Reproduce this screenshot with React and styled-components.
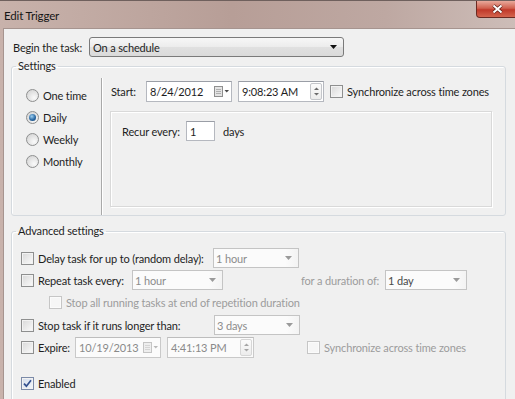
import React from "react";
import styled, { createGlobalStyle } from "styled-components";

const GlobalStyle = createGlobalStyle`
  html, body {
    margin: 0;
    padding: 0;
    background: #f0f0f0;
  }
  body {
    font-family: Lato, "Liberation Sans", sans-serif;
    font-size: 11px;
    letter-spacing: -0.15px;
    color: #1e1e1e;
  }
`;

const Window = styled.div`
  width: 515px;
  height: 399px;
  overflow: hidden;
  display: flex;
  flex-direction: column;
  background: linear-gradient(to right, #c8b2ab, #b79e97 45%, #bea8a2 75%, #cdbdb8);
`;

const TitleBar = styled.div`
  height: 28px;
  box-sizing: border-box;
  border-top: 1px solid #6f605d;
  display: flex;
  justify-content: space-between;
  align-items: flex-start;
  flex-shrink: 0;
`;

const Title = styled.span`
  padding: 7px 0 0 4px;
  line-height: 16px;
  font-size: 11.5px;
  color: #161616;
`;

const CloseButton = styled.div`
  width: 43px;
  height: 17px;
  margin-right: -4px;
  box-sizing: border-box;
  border: 1px solid #6b2a22;
  border-top: none;
  border-radius: 0 0 0 4px;
  background: linear-gradient(#e9a99b, #d0614f 45%, #c0392a 55%, #d4644e);
  display: flex;
  align-items: center;
  justify-content: center;
`;

const Frame = styled.div`
  flex: 1;
  display: flex;
  padding-left: 3px;
`;

const Client = styled.div`
  flex: 1;
  background: #f0f0f0;
  border-top: 1px solid #a6948f;
  border-left: 1px solid #a6948f;
  padding: 8px 0 0 7px;
`;

const BeginRow = styled.div`
  display: flex;
  align-items: center;
  height: 20px;
  padding-left: 2px;
`;

const Label = styled.span`
  width: ${(p) => (p.$w ? `${p.$w}px` : "auto")};
  margin-left: ${(p) => p.$ml || 0}px;
  flex-shrink: 0;
  white-space: nowrap;
  color: ${(p) => (p.$dim ? "#9c9c9c" : "#1e1e1e")};
`;

const Select = styled.div`
  width: 255px;
  height: 20px;
  box-sizing: border-box;
  border: 1px solid #7a7a7a;
  border-radius: 3px;
  background: linear-gradient(#f7f7f7, #ececec 50%, #e0e0e0 51%, #dadada);
  display: flex;
  align-items: center;
  justify-content: space-between;
  padding: 0 6px 0 3px;
`;

const Group = styled.fieldset`
  width: 495px;
  box-sizing: border-box;
  margin: ${(p) => p.$mt}px 0 0 0;
  padding: 0;
  border: 1px solid #d5dadf;
  border-radius: 3px;
  box-shadow: inset 1px 1px 0 #fff;
  min-width: 0;
`;

const Legend = styled.legend`
  margin-left: 4px;
  padding: 0 2px;
  line-height: 16px;
  color: #1e1e1e;
`;

const SettingsBody = styled.div`
  display: flex;
  height: 141px;
`;

const RadioColumn = styled.div`
  width: 89px;
  box-sizing: border-box;
  padding: 10px 0 0 14px;
  display: flex;
  flex-direction: column;
`;

const RadioRow = styled.div`
  height: 22px;
  display: flex;
  align-items: center;
  gap: 4px;
`;

const RadioCircle = styled.span`
  width: 13px;
  height: 13px;
  box-sizing: border-box;
  border-radius: 50%;
  border: 1px solid #8e8f8f;
  background: radial-gradient(circle at 65% 70%, #fafafa, #e2e2e2 55%, #cfcfcf);
  display: flex;
  align-items: center;
  justify-content: center;
  flex-shrink: 0;
`;

const RadioDot = styled.span`
  width: 7px;
  height: 7px;
  border-radius: 50%;
  background: radial-gradient(circle at 40% 35%, #9fd0f0, #2c6aa4 55%, #0f3a6b);
`;

const Separator = styled.div`
  width: 0;
  margin-top: 4px;
  border-left: 1px solid #a9a9a9;
  border-right: 1px solid #ffffff;
`;

const SchedulePanel = styled.div`
  flex: 1;
  padding: 7px 0 0 7px;
  display: flex;
  flex-direction: column;
`;

const StartRow = styled.div`
  display: flex;
  align-items: center;
  height: 21px;
`;

const Field = styled.div`
  width: ${(p) => p.$w}px;
  height: ${(p) => p.$h || 21}px;
  margin-left: ${(p) => p.$ml || 0}px;
  box-sizing: border-box;
  border: 1px solid ${(p) => (p.$disabled ? "#c9c9c9" : "#b5b8bf")};
  border-top-color: ${(p) => (p.$disabled ? "#bdbdbd" : "#9a9ea6")};
  background: ${(p) => (p.$disabled ? "#fbfbfb" : "#ffffff")};
  color: ${(p) => (p.$disabled ? "#8a8a8a" : "#1e1e1e")};
  display: flex;
  align-items: center;
  justify-content: space-between;
  padding: 0 1px 0 3px;
  flex-shrink: 0;
`;

const Spinner = styled.div`
  width: 12px;
  height: 17px;
  box-sizing: border-box;
  border: 1px solid ${(p) => (p.$disabled ? "#d6d6d6" : "#c4c6ca")};
  border-radius: 2px;
  background: linear-gradient(#fbfbfb, #ececec);
  display: flex;
  align-items: center;
  justify-content: center;
`;

const RecurBox = styled.div`
  width: 382px;
  height: 96px;
  box-sizing: border-box;
  margin-top: 9px;
  border: 1px solid #d9d9d9;
  box-shadow: 1px 1px 0 #ffffff, inset 1px 1px 0 #ffffff;
  padding: 9px 0 0 11px;
`;

const RecurRow = styled.div`
  display: flex;
  align-items: center;
  height: 20px;
`;

const AdvancedBody = styled.div`
  padding: 8px 0 40px 9px;
  display: flex;
  flex-direction: column;
`;

const OptionRow = styled.div`
  display: flex;
  align-items: center;
  height: 22px;
  margin-top: ${(p) => p.$mt || 0}px;
  padding-left: ${(p) => p.$indent || 0}px;
`;

const Box = styled.span`
  width: 13px;
  height: 13px;
  box-sizing: border-box;
  margin-right: 4px;
  margin-left: ${(p) => p.$ml || 0}px;
  flex-shrink: 0;
  border: 1px solid ${(p) => (p.$disabled ? "#c6c6c6" : p.$checked ? "#7b8aa8" : "#8e8f8f")};
  background: ${(p) =>
    p.$disabled
      ? "#f6f6f6"
      : p.$checked
      ? "linear-gradient(135deg, #d3dcec, #f4f7fc)"
      : "linear-gradient(135deg, #d8d8d8, #fbfbfb)"};
  box-shadow: inset 0 0 0 1px ${(p) => (p.$disabled ? "#fbfbfb" : "#f2f2f2")};
  display: flex;
  align-items: center;
  justify-content: center;
`;

const Combo = styled.div`
  width: ${(p) => p.$w}px;
  height: 20px;
  margin-left: ${(p) => p.$ml || 0}px;
  box-sizing: border-box;
  border: 1px solid #c4c4c4;
  background: linear-gradient(to right, #fbfbfb 85%, #f3f3f3);
  color: ${(p) => (p.$dark ? "#4a4a4a" : "#8c8c8c")};
  display: flex;
  align-items: center;
  justify-content: space-between;
  padding: 0 6px 0 2px;
  flex-shrink: 0;
`;

const Check = ({ checked, disabled, ml }) => (
  <Box $checked={checked} $disabled={disabled} $ml={ml}>
    {checked && (
      <svg width="9" height="9" viewBox="0 0 9 9">
        <path d="M1 4.6 L3.4 7.2 L8 1.2" fill="none" stroke="#33508f" strokeWidth="1.7" />
      </svg>
    )}
  </Box>
);

const Arrow = ({ color = "#333" }) => (
  <svg width="7" height="4" viewBox="0 0 7 4">
    <path d="M0 0 H7 L3.5 4 Z" fill={color} />
  </svg>
);

const SpinArrows = ({ color = "#6b6b6b" }) => (
  <svg width="7" height="13" viewBox="0 0 7 13">
    <path d="M1 5 L3.5 2.5 L6 5 Z" fill={color} />
    <path d="M1 8 L3.5 10.5 L6 8 Z" fill={color} />
  </svg>
);

const CalendarIcon = ({ faded }) => (
  <svg width="16" height="11" viewBox="0 0 16 11">
    <rect x="0.5" y="0.5" width="8" height="10" fill={faded ? "#eeeeee" : "#e4e4e4"} stroke={faded ? "#c4c4c4" : "#8f8f8f"} />
    <path d="M2 3.5 H7 M2 5.5 H7 M2 7.5 H7" stroke={faded ? "#d5d5d5" : "#b0b0b0"} />
    <path d="M10.5 4 H15 L12.75 6.5 Z" fill={faded ? "#b8b8b8" : "#4a4a4a"} />
  </svg>
);

const Radio = ({ label, selected }) => (
  <RadioRow>
    <RadioCircle>{selected && <RadioDot />}</RadioCircle>
    <span>{label}</span>
  </RadioRow>
);

function App() {
  return (
    <Window>
      <GlobalStyle />
      <TitleBar>
        <Title>Edit Trigger</Title>
        <CloseButton>
          <svg width="11" height="10" viewBox="0 0 11 10">
            <path d="M1.5 1.5 L9.5 8.5 M9.5 1.5 L1.5 8.5" stroke="#5a1d16" strokeWidth="3.4" />
            <path d="M1.5 1.5 L9.5 8.5 M9.5 1.5 L1.5 8.5" stroke="#ffffff" strokeWidth="2" />
          </svg>
        </CloseButton>
      </TitleBar>
      <Frame>
        <Client>
          <BeginRow>
            <Label $w={76}>Begin the task:</Label>
            <Select>
              <span>On a schedule</span>
              <Arrow color="#111" />
            </Select>
          </BeginRow>

          <Group $mt={1}>
            <Legend>Settings</Legend>
            <SettingsBody>
              <RadioColumn>
                <Radio label="One time" />
                <Radio label="Daily" selected />
                <Radio label="Weekly" />
                <Radio label="Monthly" />
              </RadioColumn>
              <Separator />
              <SchedulePanel>
                <StartRow>
                  <Label $w={35} $ml={1}>Start:</Label>
                  <Field $w={86}>
                    <span>8/24/2012</span>
                    <CalendarIcon />
                  </Field>
                  <Field $w={86} $ml={6}>
                    <span>9:08:23 AM</span>
                    <Spinner>
                      <SpinArrows />
                    </Spinner>
                  </Field>
                  <Check ml={6} />
                  <Label>Synchronize across time zones</Label>
                </StartRow>
                <RecurBox>
                  <RecurRow>
                    <Label $w={64}>Recur every:</Label>
                    <Field $w={29} $h={20}>
                      <span>1</span>
                    </Field>
                    <Label $ml={8}>days</Label>
                  </RecurRow>
                </RecurBox>
              </SchedulePanel>
            </SettingsBody>
          </Group>

          <Group $mt={7}>
            <Legend>Advanced settings</Legend>
            <AdvancedBody>
              <OptionRow>
                <Check />
                <Label $w={175}>Delay task for up to (random delay):</Label>
                <Combo $w={86}>
                  <span>1 hour</span>
                  <Arrow color="#9a9a9a" />
                </Combo>
              </OptionRow>
              <OptionRow>
                <Check />
                <Label $w={94}>Repeat task every:</Label>
                <Combo $w={91}>
                  <span>1 hour</span>
                  <Arrow color="#9a9a9a" />
                </Combo>
                <Label $w={84} $ml={78} $dim>
                  for a duration of:
                </Label>
                <Combo $w={82} $dark>
                  <span>1 day</span>
                  <Arrow color="#9a9a9a" />
                </Combo>
              </OptionRow>
              <OptionRow $indent={28}>
                <Check disabled />
                <Label $dim>Stop all running tasks at end of repetition duration</Label>
              </OptionRow>
              <OptionRow $mt={1}>
                <Check />
                <Label $w={176}>Stop task if it runs longer than:</Label>
                <Combo $w={86}>
                  <span>3 days</span>
                  <Arrow color="#9a9a9a" />
                </Combo>
              </OptionRow>
              <OptionRow>
                <Check />
                <Label $w={37}>Expire:</Label>
                <Field $w={86} $disabled>
                  <span>10/19/2013</span>
                  <CalendarIcon faded />
                </Field>
                <Field $w={87} $ml={6} $disabled>
                  <span>4:41:13 PM</span>
                  <Spinner $disabled>
                    <SpinArrows color="#a5a5a5" />
                  </Spinner>
                </Field>
                <Check disabled ml={53} />
                <Label $dim>Synchronize across time zones</Label>
              </OptionRow>
              <OptionRow $mt={14}>
                <Check checked />
                <Label>Enabled</Label>
              </OptionRow>
            </AdvancedBody>
          </Group>
        </Client>
      </Frame>
    </Window>
  );
}

export default App;
